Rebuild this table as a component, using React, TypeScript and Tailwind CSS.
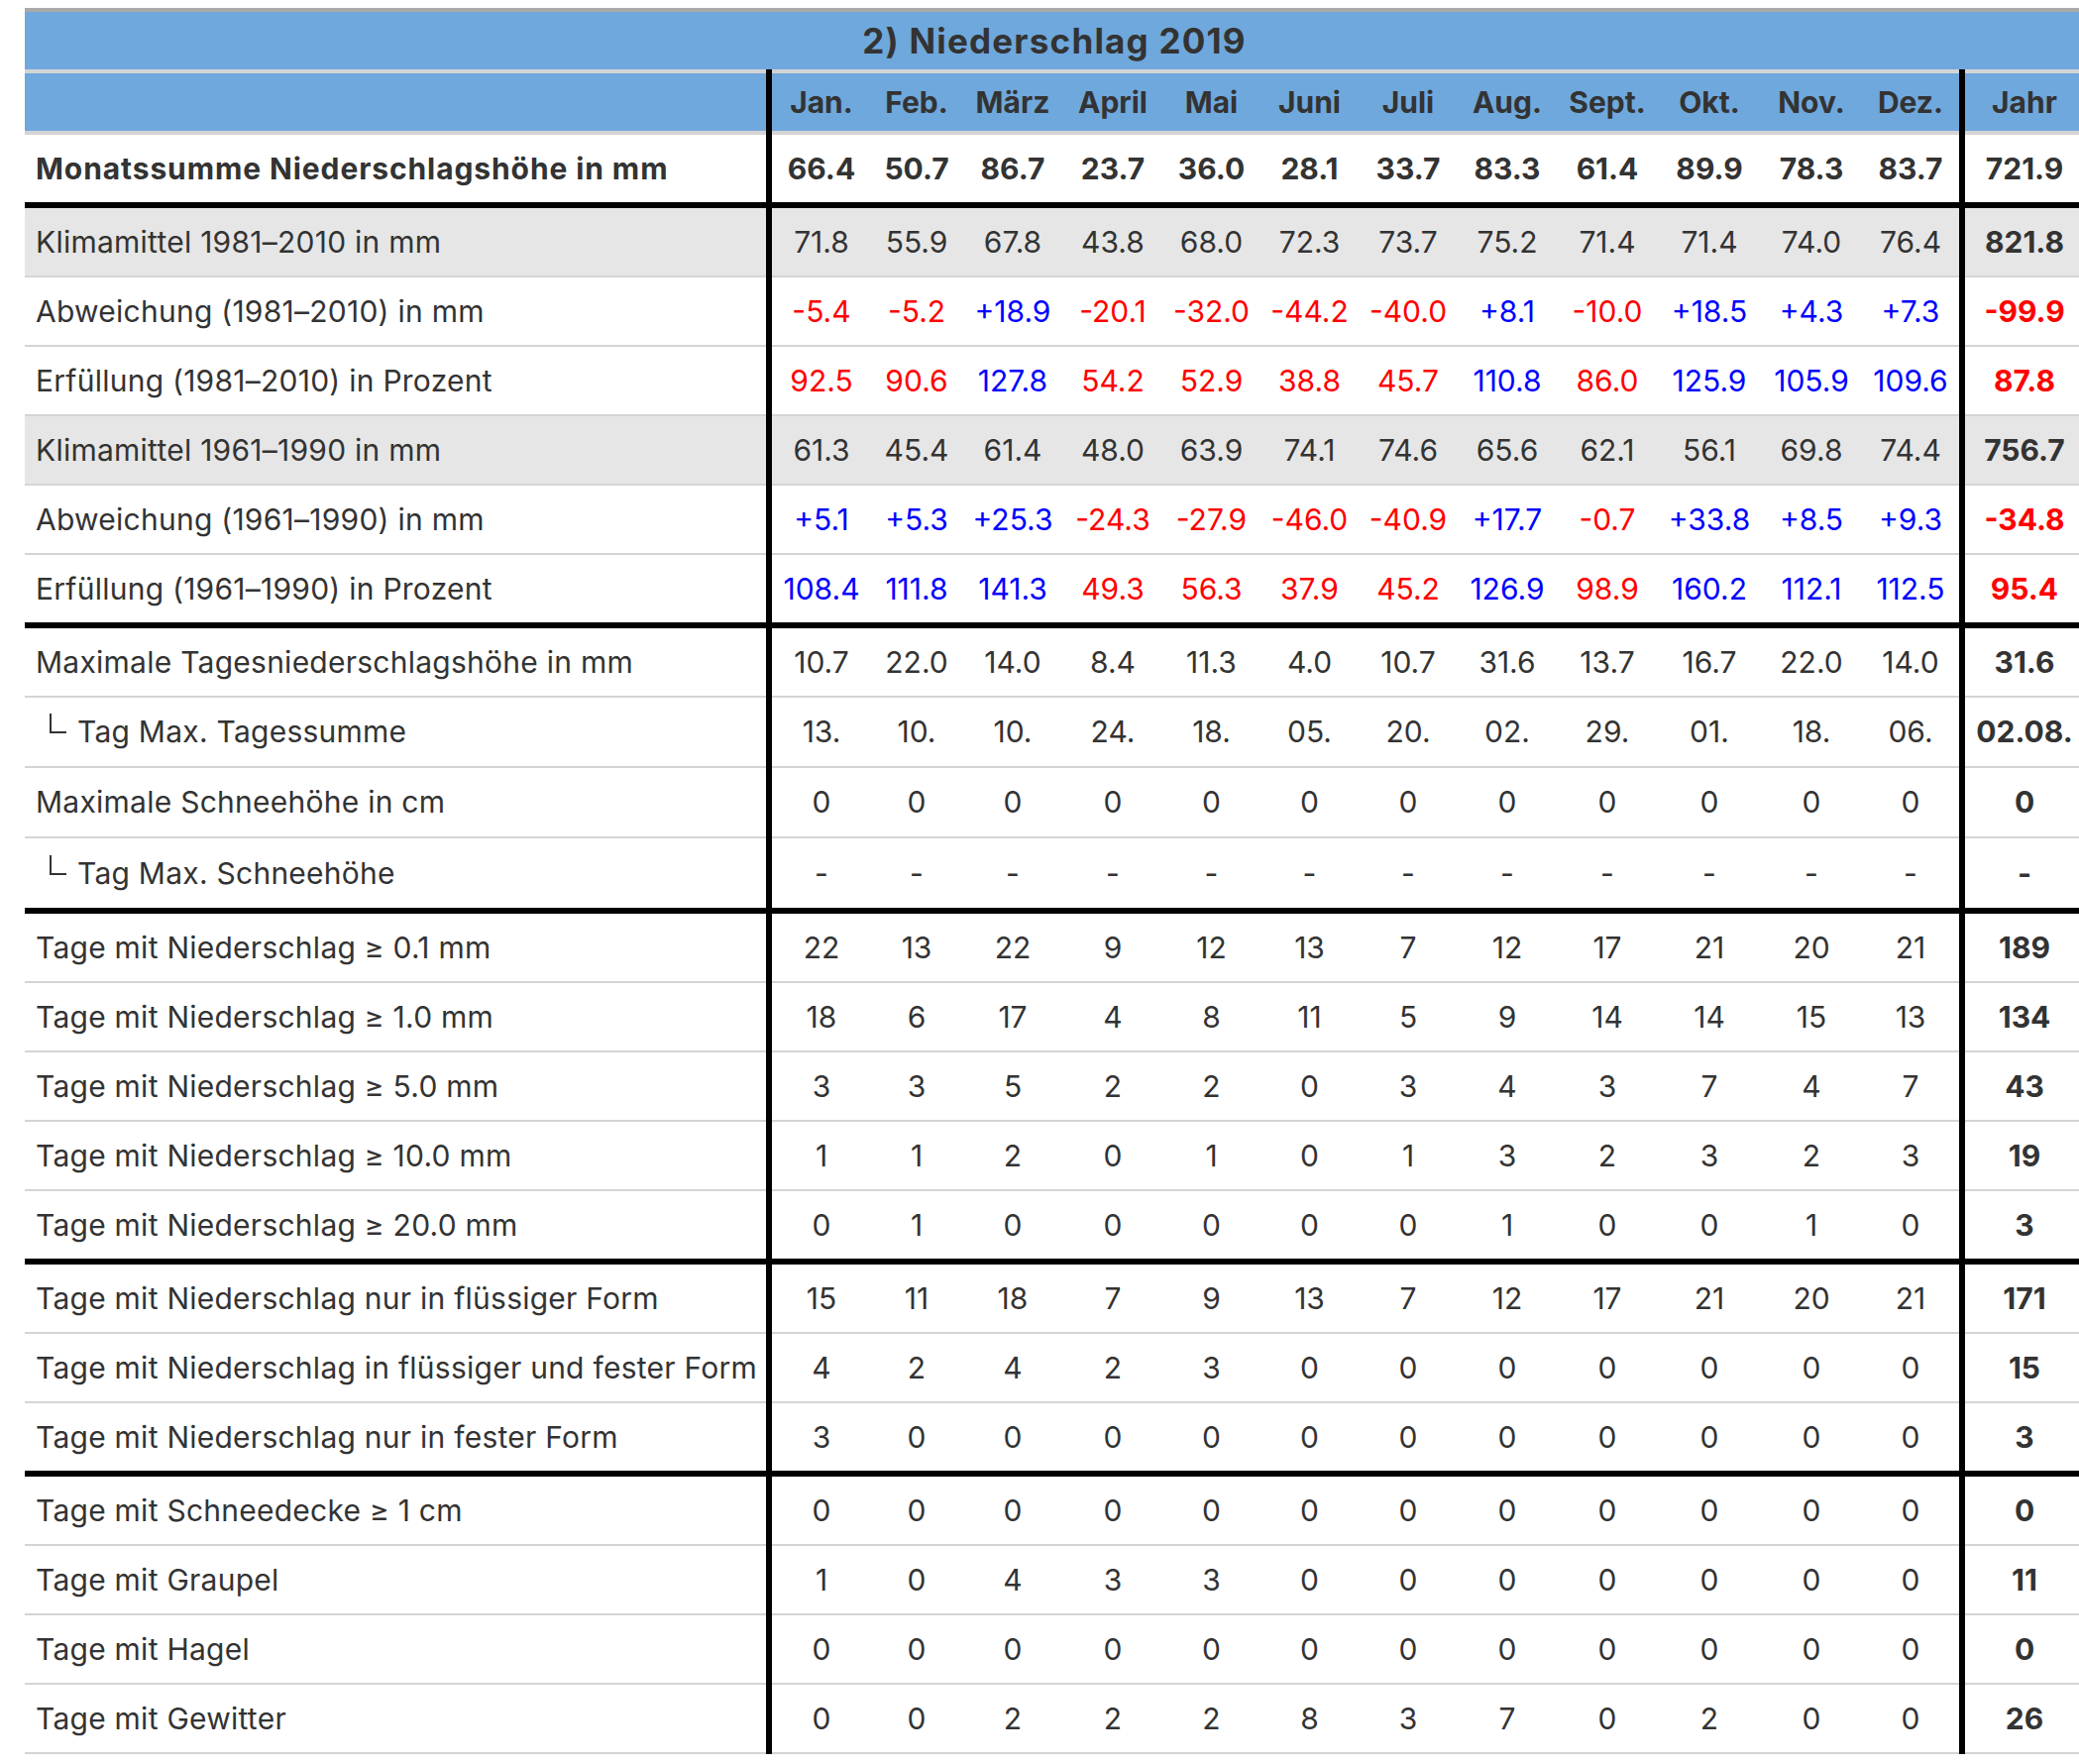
import * as React from "react";

type Fila = {
  etiqueta: React.ReactNode;
  valores: string[];
  jahr: string;
  color?: "signo" | "prozent";
  gris?: boolean;
  negrita?: boolean;
  alto: string;
  fin?: boolean;
};

const MESES = ["Jan.", "Feb.", "März", "April", "Mai", "Juni", "Juli", "Aug.", "Sept.", "Okt.", "Nov.", "Dez."];

const GRID =
  "grid grid-cols-[748px_6px_100px_92px_102px_100px_99px_99px_100px_100px_102px_104px_102px_98px_6px_120px]";

// Unterzeile mit Winkel-Markierung (└)
function sub(text: string) {
  return (
    <span>
      <span className="mb-[9px] ml-[14px] mr-[11px] inline-block h-[20px] w-[17px] border-b-2 border-l-2 border-[#333333]" />
      {text}
    </span>
  );
}

const secciones: Fila[][] = [
  [
    {
      etiqueta: "Klimamittel 1981–2010 in mm",
      valores: ["71.8", "55.9", "67.8", "43.8", "68.0", "72.3", "73.7", "75.2", "71.4", "71.4", "74.0", "76.4"],
      jahr: "821.8",
      gris: true,
      alto: "h-[70px]",
    },
    {
      etiqueta: "Abweichung (1981–2010) in mm",
      valores: ["-5.4", "-5.2", "+18.9", "-20.1", "-32.0", "-44.2", "-40.0", "+8.1", "-10.0", "+18.5", "+4.3", "+7.3"],
      jahr: "-99.9",
      color: "signo",
      alto: "h-[70px]",
    },
    {
      etiqueta: "Erfüllung (1981–2010) in Prozent",
      valores: ["92.5", "90.6", "127.8", "54.2", "52.9", "38.8", "45.7", "110.8", "86.0", "125.9", "105.9", "109.6"],
      jahr: "87.8",
      color: "prozent",
      alto: "h-[70px]",
    },
    {
      etiqueta: "Klimamittel 1961–1990 in mm",
      valores: ["61.3", "45.4", "61.4", "48.0", "63.9", "74.1", "74.6", "65.6", "62.1", "56.1", "69.8", "74.4"],
      jahr: "756.7",
      gris: true,
      alto: "h-[70px]",
    },
    {
      etiqueta: "Abweichung (1961–1990) in mm",
      valores: ["+5.1", "+5.3", "+25.3", "-24.3", "-27.9", "-46.0", "-40.9", "+17.7", "-0.7", "+33.8", "+8.5", "+9.3"],
      jahr: "-34.8",
      color: "signo",
      alto: "h-[70px]",
    },
    {
      etiqueta: "Erfüllung (1961–1990) in Prozent",
      valores: ["108.4", "111.8", "141.3", "49.3", "56.3", "37.9", "45.2", "126.9", "98.9", "160.2", "112.1", "112.5"],
      jahr: "95.4",
      color: "prozent",
      alto: "h-[74px]",
      fin: true,
    },
  ],
  [
    {
      etiqueta: "Maximale Tagesniederschlagshöhe in mm",
      valores: ["10.7", "22.0", "14.0", "8.4", "11.3", "4.0", "10.7", "31.6", "13.7", "16.7", "22.0", "14.0"],
      jahr: "31.6",
      alto: "h-[70px]",
    },
    {
      etiqueta: sub("Tag Max. Tagessumme"),
      valores: ["13.", "10.", "10.", "24.", "18.", "05.", "20.", "02.", "29.", "01.", "18.", "06."],
      jahr: "02.08.",
      alto: "h-[71px]",
    },
    {
      etiqueta: "Maximale Schneehöhe in cm",
      valores: ["0", "0", "0", "0", "0", "0", "0", "0", "0", "0", "0", "0"],
      jahr: "0",
      alto: "h-[71px]",
    },
    {
      etiqueta: sub("Tag Max. Schneehöhe"),
      valores: ["-", "-", "-", "-", "-", "-", "-", "-", "-", "-", "-", "-"],
      jahr: "-",
      alto: "h-[76px]",
      fin: true,
    },
  ],
  [
    {
      etiqueta: "Tage mit Niederschlag ≥ 0.1 mm",
      valores: ["22", "13", "22", "9", "12", "13", "7", "12", "17", "21", "20", "21"],
      jahr: "189",
      alto: "h-[70px]",
    },
    {
      etiqueta: "Tage mit Niederschlag ≥ 1.0 mm",
      valores: ["18", "6", "17", "4", "8", "11", "5", "9", "14", "14", "15", "13"],
      jahr: "134",
      alto: "h-[70px]",
    },
    {
      etiqueta: "Tage mit Niederschlag ≥ 5.0 mm",
      valores: ["3", "3", "5", "2", "2", "0", "3", "4", "3", "7", "4", "7"],
      jahr: "43",
      alto: "h-[70px]",
    },
    {
      etiqueta: "Tage mit Niederschlag ≥ 10.0 mm",
      valores: ["1", "1", "2", "0", "1", "0", "1", "3", "2", "3", "2", "3"],
      jahr: "19",
      alto: "h-[70px]",
    },
    {
      etiqueta: "Tage mit Niederschlag ≥ 20.0 mm",
      valores: ["0", "1", "0", "0", "0", "0", "0", "1", "0", "0", "1", "0"],
      jahr: "3",
      alto: "h-[74px]",
      fin: true,
    },
  ],
  [
    {
      etiqueta: "Tage mit Niederschlag nur in flüssiger Form",
      valores: ["15", "11", "18", "7", "9", "13", "7", "12", "17", "21", "20", "21"],
      jahr: "171",
      alto: "h-[70px]",
    },
    {
      etiqueta: "Tage mit Niederschlag in flüssiger und fester Form",
      valores: ["4", "2", "4", "2", "3", "0", "0", "0", "0", "0", "0", "0"],
      jahr: "15",
      alto: "h-[70px]",
    },
    {
      etiqueta: "Tage mit Niederschlag nur in fester Form",
      valores: ["3", "0", "0", "0", "0", "0", "0", "0", "0", "0", "0", "0"],
      jahr: "3",
      alto: "h-[74px]",
      fin: true,
    },
  ],
  [
    {
      etiqueta: "Tage mit Schneedecke ≥ 1 cm",
      valores: ["0", "0", "0", "0", "0", "0", "0", "0", "0", "0", "0", "0"],
      jahr: "0",
      alto: "h-[70px]",
    },
    {
      etiqueta: "Tage mit Graupel",
      valores: ["1", "0", "4", "3", "3", "0", "0", "0", "0", "0", "0", "0"],
      jahr: "11",
      alto: "h-[70px]",
    },
    {
      etiqueta: "Tage mit Hagel",
      valores: ["0", "0", "0", "0", "0", "0", "0", "0", "0", "0", "0", "0"],
      jahr: "0",
      alto: "h-[70px]",
    },
    {
      etiqueta: "Tage mit Gewitter",
      valores: ["0", "0", "2", "2", "2", "8", "3", "7", "0", "2", "0", "0"],
      jahr: "26",
      alto: "h-[70px]",
    },
  ],
];

function colorDe(valor: string, modo?: Fila["color"]) {
  if (modo === "signo") return valor.startsWith("-") ? "text-[#ff0000]" : "text-[#0000ff]";
  if (modo === "prozent") return parseFloat(valor) < 100 ? "text-[#ff0000]" : "text-[#0000ff]";
  return "";
}

function FilaDatos({ fila }: { fila: Fila }) {
  const borde = fila.fin ? "border-b-[6px] border-black" : "border-b-2 border-[#d4d4d4]";
  const fondo = fila.gris ? "bg-[#e6e6e6]" : "bg-white";
  const celda = `flex items-center ${borde} ${fondo}`;
  return (
    <div className={`${GRID} ${fila.alto}`}>
      <div
        className={`${celda} whitespace-nowrap pl-[11px] ${
          fila.negrita ? "font-bold tracking-[0.9px]" : "tracking-[0.25px]"
        }`}
      >
        {fila.etiqueta}
      </div>
      <div className="bg-black" />
      {fila.valores.map((v, i) => (
        <div
          key={i}
          className={`${celda} justify-center ${colorDe(v, fila.color)} ${fila.negrita ? "font-bold" : ""}`}
        >
          {v}
        </div>
      ))}
      <div className="bg-black" />
      <div className={`${celda} justify-center font-bold ${colorDe(fila.jahr, fila.color)}`}>{fila.jahr}</div>
    </div>
  );
}

export default function App() {
  return (
    <div className="min-h-[1780px] w-full overflow-hidden bg-white pl-[25px] pt-[8px] font-[family-name:Inter,'Liberation_Sans',sans-serif] text-[30px] text-[#333333]">
      <div className="w-[2078px]">
        {/* Titel */}
        <div className="flex h-[62px] items-center justify-center border-t-4 border-[#a9a9a9] bg-[#6fa8dc] text-[35px] font-bold tracking-[1.2px]">
          2) Niederschlag 2019
        </div>

        {/* Kopfzeile */}
        <div className={`${GRID} h-[66px] font-bold`}>
          <div className="border-y-4 border-[#d4d4d4] bg-[#6fa8dc]" />
          <div className="bg-black" />
          {MESES.map((m) => (
            <div key={m} className="flex items-center justify-center border-y-4 border-[#d4d4d4] bg-[#6fa8dc]">
              {m}
            </div>
          ))}
          <div className="bg-black" />
          <div className="flex items-center justify-center border-y-4 border-[#d4d4d4] bg-[#6fa8dc]">Jahr</div>
        </div>

        <FilaDatos
          fila={{
            etiqueta: "Monatssumme Niederschlagshöhe in mm",
            valores: ["66.4", "50.7", "86.7", "23.7", "36.0", "28.1", "33.7", "83.3", "61.4", "89.9", "78.3", "83.7"],
            jahr: "721.9",
            negrita: true,
            alto: "h-[74px]",
            fin: true,
          }}
        />

        {secciones.map((filas, s) => (
          <div key={s}>
            {filas.map((fila, i) => (
              <FilaDatos key={i} fila={fila} />
            ))}
          </div>
        ))}
      </div>
    </div>
  );
}
